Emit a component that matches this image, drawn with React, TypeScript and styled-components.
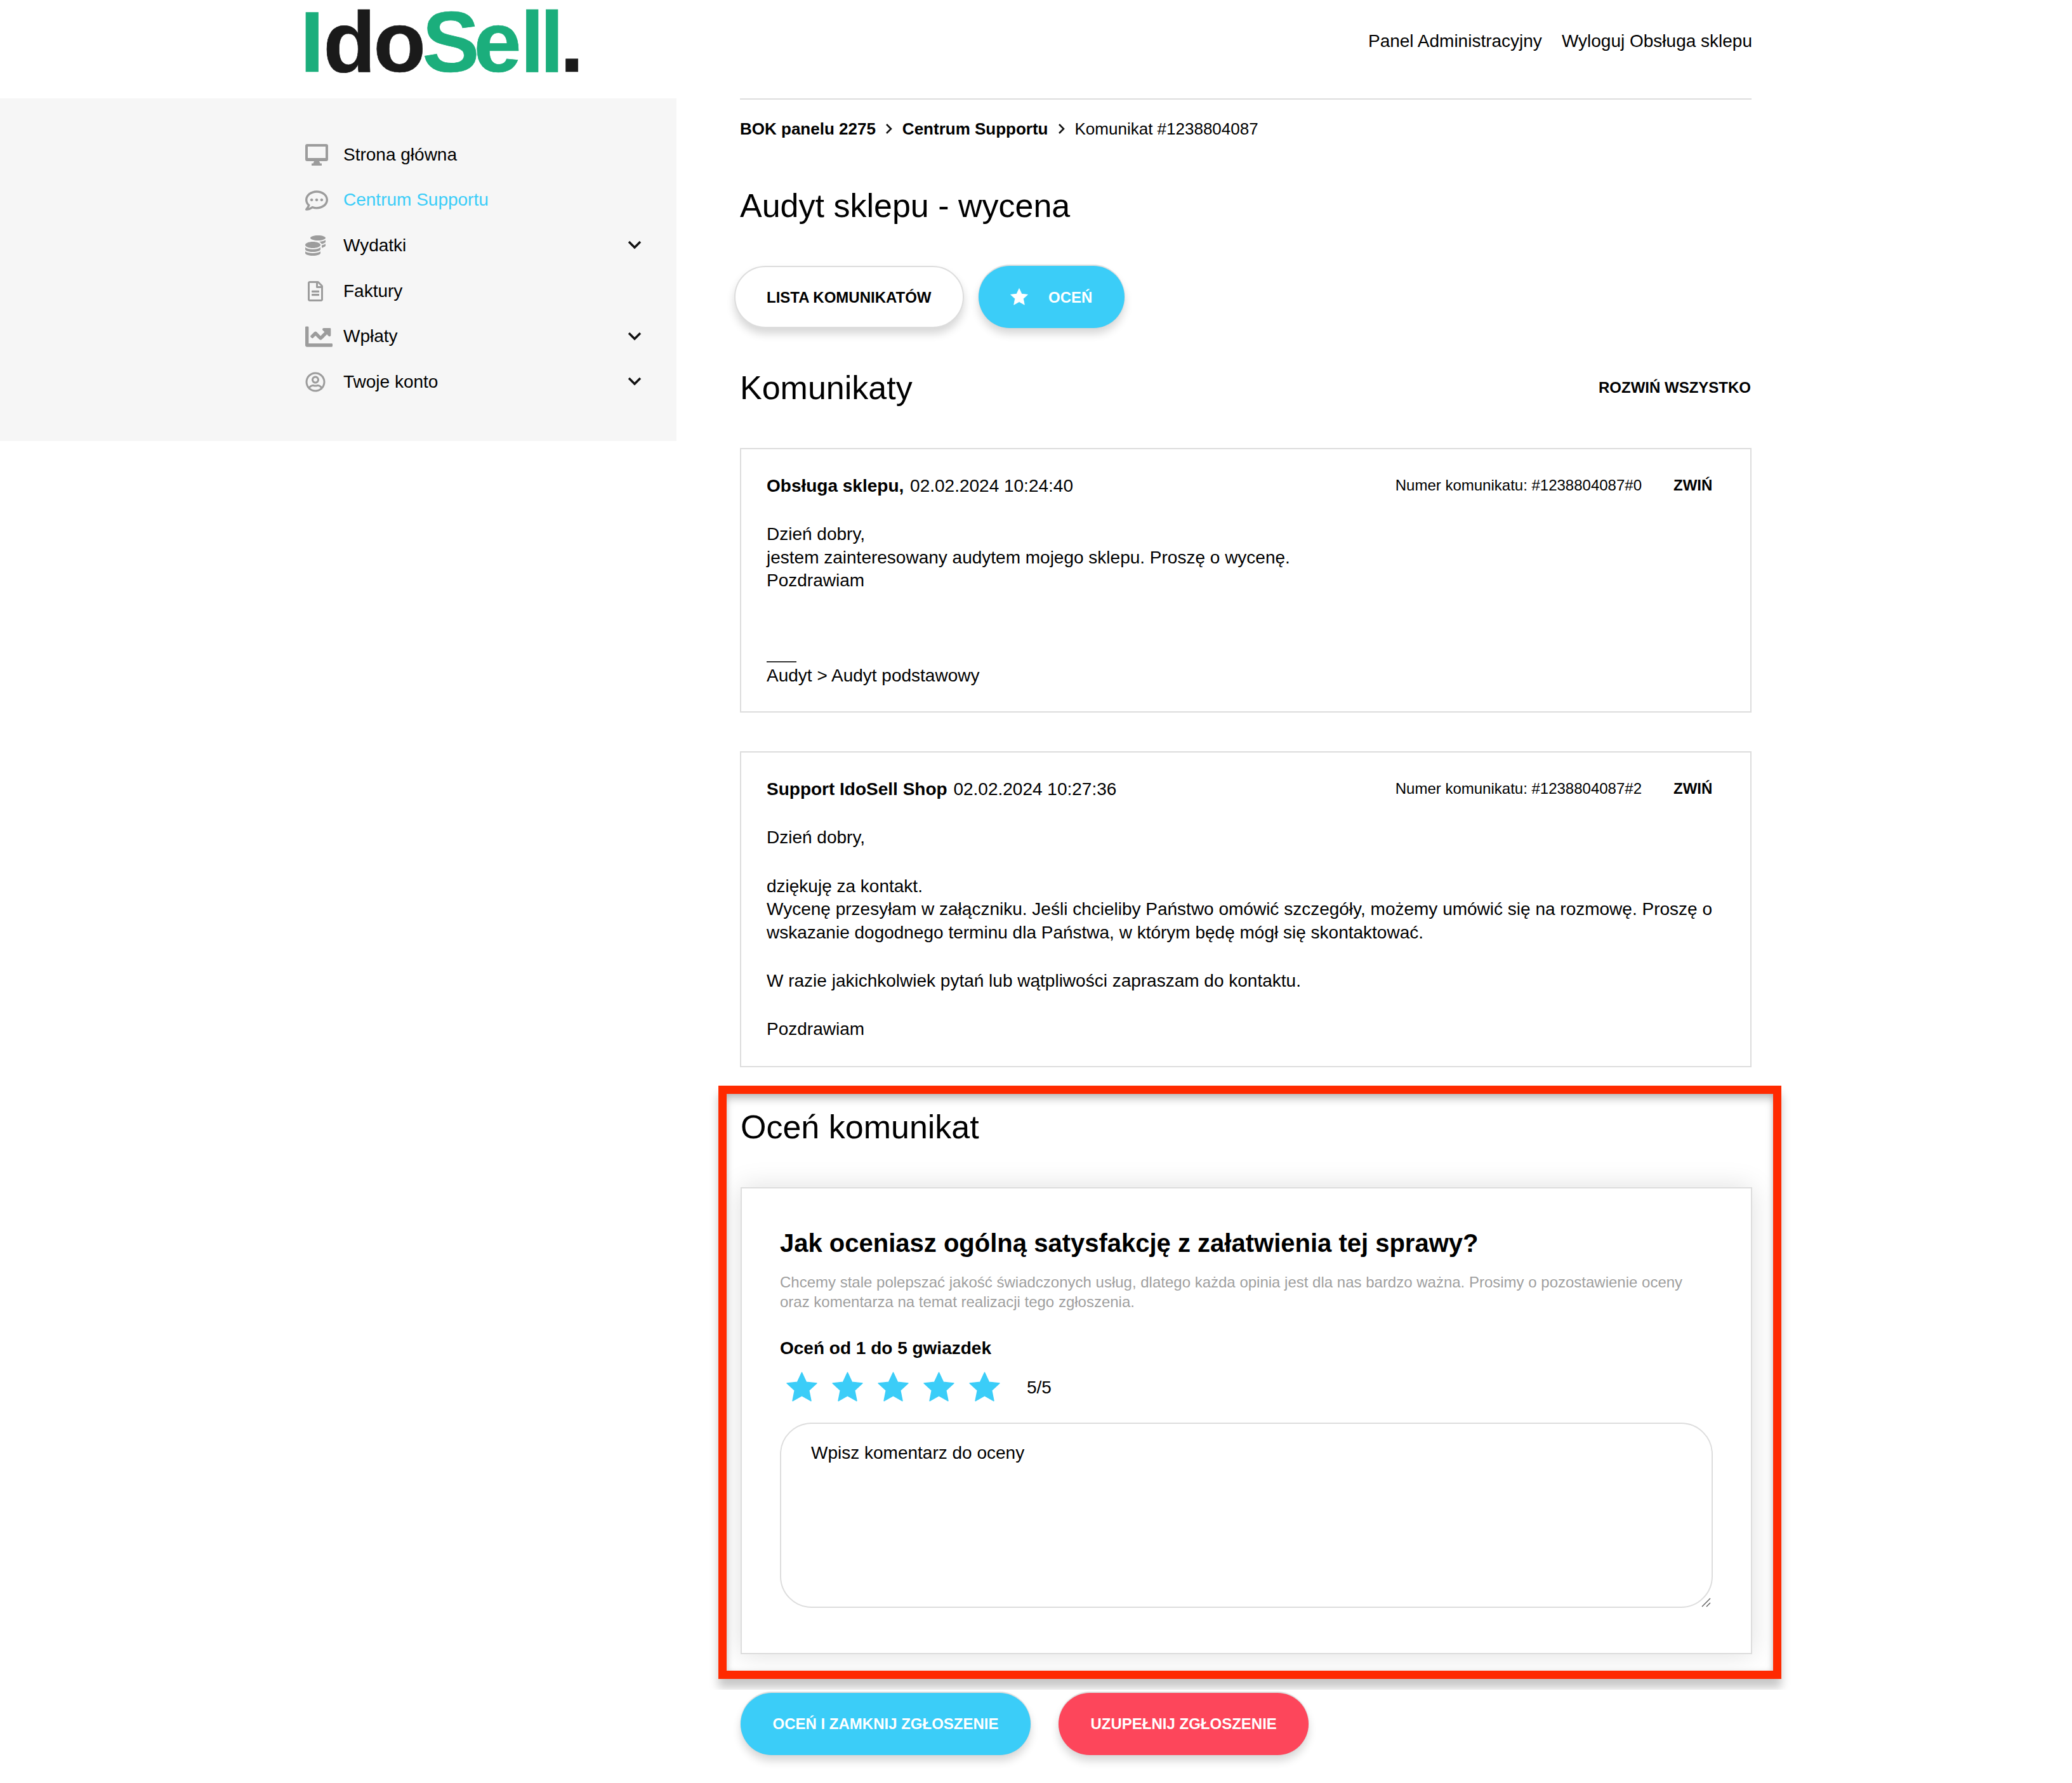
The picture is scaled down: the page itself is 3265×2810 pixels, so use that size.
import React from "react";
import styled, { createGlobalStyle } from "styled-components";
import { FaRegCommentDots, FaCoins, FaRegFileAlt, FaChartLine, FaRegUserCircle } from "react-icons/fa";

const Global = createGlobalStyle`
  html, body { margin: 0; padding: 0; background: #fff; }
  body { font-family: "Liberation Sans", Arial, sans-serif; color: #000; font-size: 28px; line-height: 36.4px; }
  * { box-sizing: border-box; }
`;

const BLUE = "#3bcdf8";
const RED = "#fd465b";
const LINE = "#dddddd";

const Page = styled.div`width: 3265px; height: 2810px; overflow: hidden;`;
const TopBar = styled.header`
  height: 155px; padding: 0 504px 0 470px; display: flex; justify-content: space-between; align-items: flex-start;
`;
const LogoArt = styled.svg`
  display: block; flex: none; font-family: "Liberation Sans", Arial, sans-serif; font-size: 135px; font-weight: 700;
`;
const TopLinks = styled.nav`display: flex; gap: 31px; padding-top: 47px;`;
const TopLink = styled.span`font-size: 28px; line-height: 36px;`;

const Body = styled.div`display: flex;`;
const Sidebar = styled.aside`
  width: 1066px; height: 540px; background: #f6f6f6; padding: 53px 55px 0 481px; flex: none;
`;
const NavRow = styled.div<{ $active?: boolean }>`
  height: 71.7px; display: flex; align-items: center; color: ${(p) => (p.$active ? BLUE : "#000")}; font-size: 28px;
`;
const NavIcon = styled.span`
  width: 60px; flex: none; display: flex; align-items: center; color: #9c9c9c;
`;
const NavLabel = styled.span`flex: 1;`;
const Chevron = styled.svg`margin-top: -2px;`;

const Main = styled.main`width: 1594px; margin-left: 100px; border-top: 2px solid ${LINE}; flex: none;`;
const Crumbs = styled.div`
  margin-top: 28px; display: flex; align-items: center; gap: 15.5px; font-size: 26px; line-height: 36px;
`;
const Crumb = styled.span<{ $bold?: boolean }>`font-weight: ${(p) => (p.$bold ? 700 : 400)};`;
const PageTitle = styled.h1`margin: 73px 0 0; font-size: 52px; line-height: 60px; font-weight: 400;`;
const ButtonRow = styled.div<{ $shift: number; $gap: number; $top: number }>`
  display: flex; margin: ${(p) => p.$top}px 0 0 ${(p) => p.$shift}px; gap: ${(p) => p.$gap}px;
`;
const Pill = styled.button<{ $bg?: string }>`
  height: 98px; padding: 1px ${(p) => (p.$bg ? 50.5 : 49)}px 0; border-radius: 49px;
  border: ${(p) => (p.$bg ? "none" : `2px solid ${LINE}`)};
  background: ${(p) => p.$bg || "#fff"}; color: ${(p) => (p.$bg ? "#fff" : "#000")};
  font: 700 24px "Liberation Sans", Arial, sans-serif; display: flex; align-items: center; gap: 32px;
  box-shadow: ${(p) => (p.$bg ? `0 -2px 1px ${LINE}, 0 0 2px #ccc, ` : "")}0 9px 14px rgba(0,0,0,.16);
`;
const PillStar = styled.span`display: flex; margin-top: -3px;`;
const SectionHead = styled.div`
  margin-top: 64px; display: flex; justify-content: space-between; align-items: center;
`;
const SectionTitle = styled.h2`margin: 0; font-size: 52px; line-height: 60px; font-weight: 400;`;
const ExpandAll = styled.span`font-size: 24px; font-weight: 700; padding-right: 1px;`;

const MessageCard = styled.article<{ $top: number; $bottom: number }>`
  margin-top: ${(p) => p.$top}px; border: 2px solid ${LINE}; padding: 40px 58px ${(p) => p.$bottom}px 40px;
`;
const MessageHead = styled.div`display: flex; align-items: center; margin-bottom: 40px;`;
const Author = styled.div`flex: 1;`;
const Strong = styled.b`font-weight: 700; margin-right: 2px;`;
const MessageNo = styled.span`font-size: 24px; margin-top: -2px;`;
const Collapse = styled.span`font-size: 24px; font-weight: 700; margin: -2px 0 0 50px; width: 63px;`;
const Para = styled.p<{ $after?: number }>`margin: 0 0 ${(p) => p.$after ?? 40}px; padding-right: 2px;`;
const SigRule = styled.div`width: 47px; height: 2px; background: #333; margin-bottom: 3px;`;

const Highlight = styled.section`
  margin: 29px -47px 0 -34px; border: 13px solid #ff2a00; padding: 22px 33px 26px 22px; overflow: hidden;
  box-shadow: 0 14px 14px rgba(0,0,0,.22), inset 0 9px 14px -2px rgba(0,0,0,.26), inset 0 0 9px rgba(0,0,0,.08);
  clip-path: inset(-30px -30px -17px -30px);
`;
const RateCard = styled.div`
  margin-top: 65px; border: 2px solid ${LINE}; background: #fff; padding: 62px 60px 71px;
  box-shadow: 0 0 40px rgba(0,0,0,.13);
`;
const RateTitle = styled.h3`margin: 0; font-size: 40px; line-height: 48px; font-weight: 700;`;
const RateHint = styled.p`margin: 22px 0 0; font-size: 24px; line-height: 31px; color: #9f9f9f;`;
const RateLabel = styled.div`margin-top: 40px; font-size: 28px; line-height: 36px; font-weight: 700;`;
const Stars = styled.div`margin: 19px 0 0 10px; display: flex; align-items: center; gap: 23px; height: 47px;`;
const Score = styled.span`margin: 3px 0 0 19px; font-size: 28px;`;
const CommentWrap = styled.div`position: relative; margin-top: 33px; width: 1470px; height: 292px;`;
const Comment = styled.textarea`
  display: block; width: 100%; height: 100%; border: 2px solid ${LINE}; border-radius: 50px;
  padding: 28px 47px; font: 400 28px/36px "Liberation Sans", Arial, sans-serif; outline: none; resize: none; background: #fff;
  &::placeholder { color: #000; opacity: 1; }
`;
const Grip = styled.svg`position: absolute; right: 3px; bottom: 1px;`;

const StarIcon = ({ w, h, color }: { w: number; h: number; color: string }) => (
  <svg width={w} height={h} viewBox="0 0 24 23" fill={color} stroke={color} strokeWidth="0.7" strokeLinejoin="round">
    <polygon points="12,.5 15.4,7.9 23.5,8.8 17.5,14.3 19.1,22.4 12,18.4 4.9,22.4 6.5,14.3 .5,8.8 8.6,7.9" />
  </svg>
);
const Monitor = () => (
  <svg width="36" height="34" viewBox="0 0 36 34" fill="#9c9c9c">
    <path fillRule="evenodd" d="M3 0h30a3 3 0 0 1 3 3v21a3 3 0 0 1-3 3H3a3 3 0 0 1-3-3V3a3 3 0 0 1 3-3zm1 4v18h28V4z" />
    <path d="M14 27h8l1.500 3.500H26V34H10v-3.500h2.500z" />
  </svg>
);
const ChevDown = () => (
  <Chevron width="22" height="14" viewBox="0 0 22 14" fill="none" stroke="#111" strokeWidth="3.4">
    <path d="M2 2l9 9 9-9" />
  </Chevron>
);
const ChevRight = () => (
  <svg width="11" height="18" viewBox="0 0 11 18" fill="none" stroke="#111" strokeWidth="2.6">
    <path d="M2 2l7 7-7 7" />
  </svg>
);

const nav = [
  { label: "Strona główna", icon: <Monitor /> },
  { label: "Centrum Supportu", active: true, icon: <FaRegCommentDots size={36} /> },
  { label: "Wydatki", chev: true, icon: <FaCoins size={32} /> },
  { label: "Faktury", icon: <FaRegFileAlt size={32} /> },
  { label: "Wpłaty", chev: true, icon: <FaChartLine size={43} /> },
  { label: "Twoje konto", chev: true, icon: <FaRegUserCircle size={32} /> },
];

const GREEN = "#1bae7c";
const DARK = "#1a1a1a";

export default function App() {
  return (
    <Page>
      <Global />
      <TopBar>
        <LogoArt width="450" height="122" viewBox="0 0 450 122" role="img" aria-label="IdoSell.">
          <text y="113" strokeWidth="0.7">
            <tspan x="3" fill={GREEN} stroke={GREEN}>I</tspan>
            <tspan x="39.5" fill={DARK} stroke={DARK}>d</tspan>
            <tspan x="118.500" fill={DARK} stroke={DARK}>o</tspan>
            <tspan x="195.500" fill={GREEN} stroke={GREEN}>S</tspan>
            <tspan x="276.500" fill={GREEN} stroke={GREEN}>e</tspan>
            <tspan x="350" fill={GREEN} stroke={GREEN}>l</tspan>
            <tspan x="381" fill={GREEN} stroke={GREEN}>l</tspan>
            <tspan x="412.500" fill={DARK} stroke={DARK}>.</tspan>
          </text>
        </LogoArt>
        <TopLinks>
          <TopLink>Panel Administracyjny</TopLink>
          <TopLink>Wyloguj Obsługa sklepu</TopLink>
        </TopLinks>
      </TopBar>
      <Body>
        <Sidebar>
          {nav.map((n) => (
            <NavRow key={n.label} $active={n.active}>
              <NavIcon>{n.icon}</NavIcon>
              <NavLabel>{n.label}</NavLabel>
              {n.chev && <ChevDown />}
            </NavRow>
          ))}
        </Sidebar>
        <Main>
          <Crumbs>
            <Crumb $bold>BOK panelu 2275</Crumb>
            <ChevRight />
            <Crumb $bold>Centrum Supportu</Crumb>
            <ChevRight />
            <Crumb>Komunikat #1238804087</Crumb>
          </Crumbs>
          <PageTitle>Audyt sklepu - wycena</PageTitle>
          <ButtonRow $shift={-9} $gap={23} $top={65}>
            <Pill>LISTA KOMUNIKATÓW</Pill>
            <Pill $bg={BLUE}>
              <PillStar>
                <StarIcon w={28} h={27} color="#fff" />
              </PillStar>
              OCEŃ
            </Pill>
          </ButtonRow>
          <SectionHead>
            <SectionTitle>Komunikaty</SectionTitle>
            <ExpandAll>ROZWIŃ WSZYSTKO</ExpandAll>
          </SectionHead>
          <MessageCard $top={65} $bottom={38}>
            <MessageHead>
              <Author>
                <Strong>Obsługa sklepu,</Strong> 02.02.2024 10:24:40
              </Author>
              <MessageNo>Numer komunikatu: #1238804087#0</MessageNo>
              <Collapse>ZWIŃ</Collapse>
            </MessageHead>
            <Para $after={108}>
              Dzień dobry,
              <br />
              jestem zainteresowany audytem mojego sklepu. Proszę o wycenę.
              <br />
              Pozdrawiam
            </Para>
            <SigRule />
            <Para $after={0}>Audyt &gt; Audyt podstawowy</Para>
          </MessageCard>
          <MessageCard $top={61} $bottom={39}>
            <MessageHead>
              <Author>
                <Strong>Support IdoSell Shop</Strong> 02.02.2024 10:27:36
              </Author>
              <MessageNo>Numer komunikatu: #1238804087#2</MessageNo>
              <Collapse>ZWIŃ</Collapse>
            </MessageHead>
            <Para>Dzień dobry,</Para>
            <Para>
              dziękuję za kontakt.
              <br />
              Wycenę przesyłam w załączniku. Jeśli chcieliby Państwo omówić szczegóły, możemy umówić się na rozmowę. Proszę o wskazanie dogodnego terminu dla Państwa, w którym będę mógł się skontaktować.
            </Para>
            <Para>W razie jakichkolwiek pytań lub wątpliwości zapraszam do kontaktu.</Para>
            <Para $after={0}>Pozdrawiam</Para>
          </MessageCard>
          <Highlight>
            <SectionTitle>Oceń komunikat</SectionTitle>
            <RateCard>
              <RateTitle>Jak oceniasz ogólną satysfakcję z załatwienia tej sprawy?</RateTitle>
              <RateHint>
                Chcemy stale polepszać jakość świadczonych usług, dlatego każda opinia jest dla nas bardzo ważna. Prosimy o pozostawienie oceny oraz komentarza na temat realizacji tego zgłoszenia.
              </RateHint>
              <RateLabel>Oceń od 1 do 5 gwiazdek</RateLabel>
              <Stars>
                {[1, 2, 3, 4, 5].map((i) => (
                  <StarIcon key={i} w={49} h={47} color={BLUE} />
                ))}
                <Score>5/5</Score>
              </Stars>
              <CommentWrap>
                <Comment placeholder="Wpisz komentarz do oceny" />
                <Grip width="15" height="15" viewBox="0 0 15 15" stroke="#555" strokeWidth="1.3">
                  <path d="M1 14L14 1M8 14l6-6" />
                </Grip>
              </CommentWrap>
            </RateCard>
          </Highlight>
          <ButtonRow $shift={1} $gap={44} $top={22}>
            <Pill $bg={BLUE}>OCEŃ I ZAMKNIJ ZGŁOSZENIE</Pill>
            <Pill $bg={RED}>UZUPEŁNIJ ZGŁOSZENIE</Pill>
          </ButtonRow>
        </Main>
      </Body>
    </Page>
  );
}
